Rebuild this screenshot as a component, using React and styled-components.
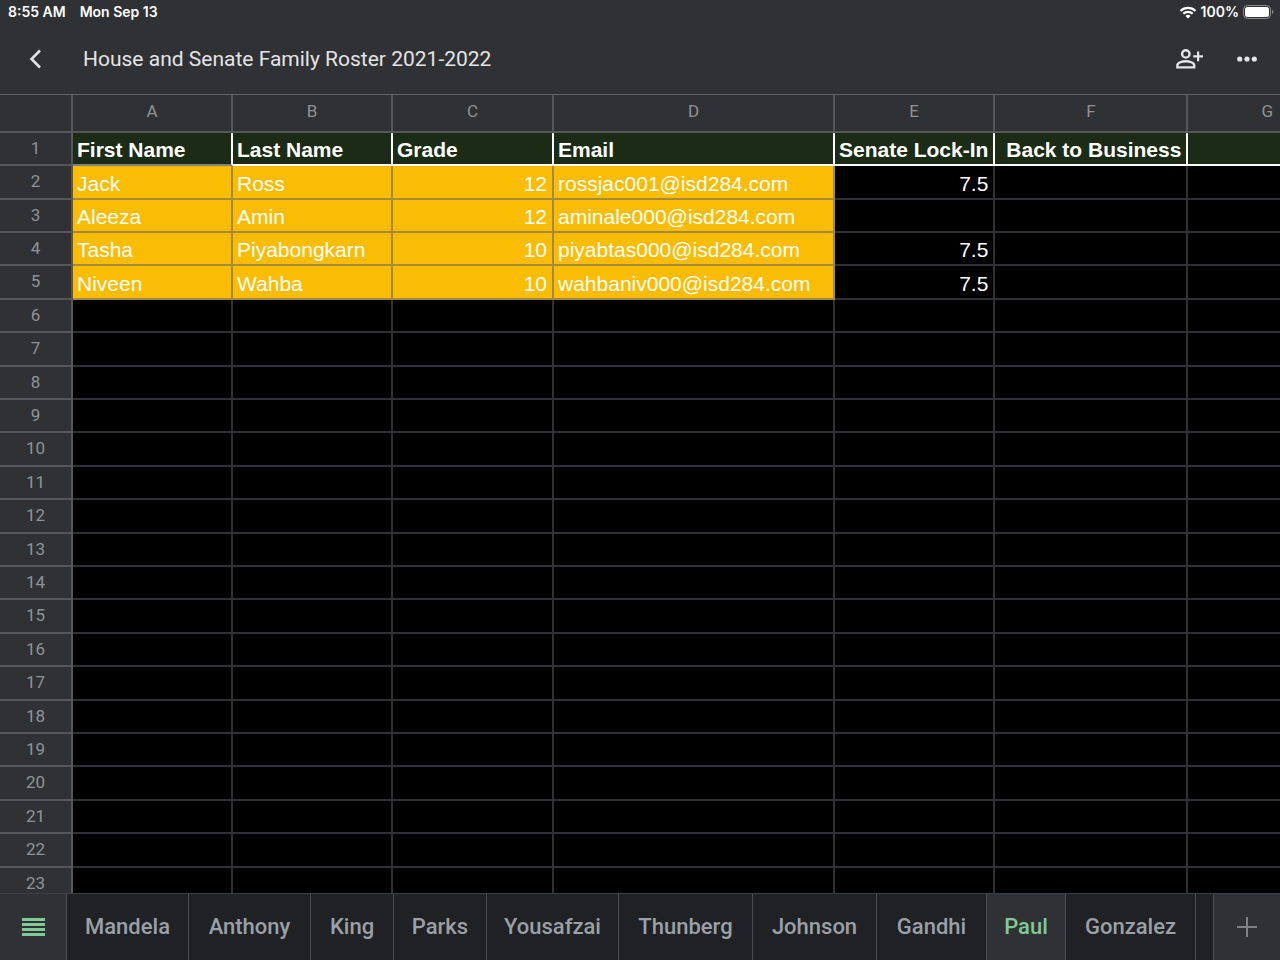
import styled, { createGlobalStyle } from 'styled-components';

const columns = [
  { name: 'A', width: 160 },
  { name: 'B', width: 160 },
  { name: 'C', width: 161 },
  { name: 'D', width: 281 },
  { name: 'E', width: 160 },
  { name: 'F', width: 193 },
  { name: 'G', width: 160 },
];

const headings = [
  'First Name',
  'Last Name',
  'Grade',
  'Email',
  'Senate Lock-In',
  'Back to Business',
  '',
];

const people = [
  ['Jack', 'Ross', 12, 'rossjac001@isd284.com', 7.5],
  ['Aleeza', 'Amin', 12, 'aminale000@isd284.com', ''],
  ['Tasha', 'Piyabongkarn', 10, 'piyabtas000@isd284.com', 7.5],
  ['Niveen', 'Wahba', 10, 'wahbaniv000@isd284.com', 7.5],
];

const ROW_COUNT = 23;
const FILLED_COLUMNS = 4;

const sheets = [
  { name: 'Mandela', width: 122 },
  { name: 'Anthony', width: 122 },
  { name: 'King', width: 83 },
  { name: 'Parks', width: 93 },
  { name: 'Yousafzai', width: 132 },
  { name: 'Thunberg', width: 134 },
  { name: 'Johnson', width: 124 },
  { name: 'Gandhi', width: 110 },
  { name: 'Paul', width: 79, active: true },
  { name: 'Gonzalez', width: 130 },
];

const WifiIcon = () => (
  <svg width="18" height="13" viewBox="0 0 18 13" fill="none" stroke="#fff">
    <path d="M1.6 4.9a10.6 10.6 0 0 1 14.8 0" strokeWidth="2.1" />
    <path d="M4.3 7.8a6.7 6.7 0 0 1 9.4 0" strokeWidth="2.1" />
    <path d="M9 12.6 6.5 10a3.6 3.6 0 0 1 5 0Z" fill="#fff" stroke="none" />
  </svg>
);

const BatteryIcon = () => (
  <svg width="31" height="14" viewBox="0 0 31 14">
    <rect x="0.5" y="0.5" width="27" height="13" rx="4" fill="none" stroke="#8b8c8f" />
    <rect x="2" y="2" width="24" height="10" rx="2.5" fill="#fff" />
    <path d="M29 4.8c1.6.5 1.6 3.9 0 4.4Z" fill="#8b8c8f" />
  </svg>
);

const BackIcon = () => (
  <svg width="14" height="20" viewBox="0 0 14 20" fill="none" stroke="#e3e4e6">
    <path d="M12 1.5 3.5 10l8.5 8.5" strokeWidth="2.5" />
  </svg>
);

const AddPersonIcon = () => (
  <svg width="28" height="20" viewBox="0 0 28 20" fill="none" stroke="#e3e4e6">
    <circle cx="10.8" cy="4.9" r="3.7" strokeWidth="2.4" />
    <path
      d="M2.4 18.4v-2.2c0-2.5 4.9-4 8.4-4s8.4 1.5 8.4 4v2.2Z"
      strokeWidth="2.4"
    />
    <path d="M18.2 7.3H28M23.1 2.4v9.8" strokeWidth="2.2" />
  </svg>
);

const MoreIcon = () => (
  <svg width="20" height="6" viewBox="0 0 20 6" fill="#e3e4e6">
    <circle cx="2.7" cy="3" r="2.6" />
    <circle cx="10" cy="3" r="2.6" />
    <circle cx="17.3" cy="3" r="2.6" />
  </svg>
);

const SheetsIcon = () => (
  <svg width="23" height="18" viewBox="0 0 23 18" fill="#81c995">
    <rect y="0" width="23" height="3" />
    <rect y="5" width="23" height="3" />
    <rect y="10" width="23" height="3" />
    <rect y="15" width="23" height="3" />
  </svg>
);

const PlusIcon = () => (
  <svg width="20" height="20" viewBox="0 0 20 20" stroke="#7d8085">
    <path d="M10 0v20M0 10h20" strokeWidth="2" />
  </svg>
);

const App = () => {
  const rows = Array.from({ length: ROW_COUNT - 1 }, (_, i) => people[i] || []);

  return (
    <Page>
      <GlobalStyle />
      <StatusBar>
        <span>8:55 AM</span>
        <span>Mon Sep 13</span>
        <StatusRight>
          <WifiIcon />
          <span>100%</span>
          <BatteryIcon />
        </StatusRight>
      </StatusBar>

      <Toolbar>
        <IconButton aria-label="Back">
          <BackIcon />
        </IconButton>
        <Title>House and Senate Family Roster 2021-2022</Title>
        <IconButton aria-label="Share">
          <AddPersonIcon />
        </IconButton>
        <IconButton aria-label="More">
          <MoreIcon />
        </IconButton>
      </Toolbar>

      <Grid>
        <Table>
          <colgroup>
            <Column $width={73} />
            {columns.map(({ name, width }) => (
              <Column key={name} $width={width} />
            ))}
          </colgroup>
          <thead>
            <tr>
              <ColumnLabel aria-label="Row" />
              {columns.map(({ name }) => (
                <ColumnLabel key={name} scope="col">
                  {name}
                </ColumnLabel>
              ))}
            </tr>
          </thead>
          <tbody>
            <Row>
              <RowLabel scope="row">1</RowLabel>
              {headings.map((text, i) => (
                <HeadingCell key={columns[i].name} $first={i === 0} $right={i > 4}>
                  {text}
                </HeadingCell>
              ))}
            </Row>
            {rows.map((row, r) => (
              <Row key={r}>
                <RowLabel scope="row">{r + 2}</RowLabel>
                {columns.map(({ name }, c) => (
                  <Cell
                    key={name}
                    $filled={row.length > 0 && c < FILLED_COLUMNS}
                    $right={typeof row[c] === 'number'}
                  >
                    {row[c]}
                  </Cell>
                ))}
              </Row>
            ))}
          </tbody>
        </Table>
      </Grid>

      <TabBar>
        <SheetsButton aria-label="All sheets">
          <SheetsIcon />
        </SheetsButton>
        <Tabs>
          {sheets.map(({ name, width, active }) => (
            <Tab key={name} $width={width} $active={active}>
              {name}
            </Tab>
          ))}
        </Tabs>
        <AddButton aria-label="Add sheet">
          <PlusIcon />
        </AddButton>
      </TabBar>
    </Page>
  );
};

const GlobalStyle = createGlobalStyle`
  * {
    box-sizing: border-box;
  }

  body {
    margin: 0;
    background: #000;
  }

  button {
    padding: 0;
    border: 0;
    background: none;
    font: inherit;
  }

  svg {
    display: block;
  }
`;

const Page = styled.div`
  display: flex;
  flex-direction: column;
  height: 100vh;
  background: #303134;
  color: #fff;
  font-family: 'Liberation Sans', Arial, sans-serif;
`;

const StatusBar = styled.div`
  display: flex;
  flex: none;
  align-items: center;
  gap: 14px;
  height: 24px;
  padding: 0 6px 0 8px;
  font-family: Inter, sans-serif;
  font-weight: 600;
  font-size: 14px;
  line-height: 24px;
`;

const StatusRight = styled.div`
  display: flex;
  align-items: center;
  gap: 4px;
  margin-left: auto;
`;

const Toolbar = styled.header`
  display: flex;
  flex: none;
  align-items: center;
  height: 70px;
  padding: 0 4px 0 6px;
`;

const IconButton = styled.button`
  display: flex;
  flex: none;
  align-items: center;
  justify-content: center;
  width: 58px;
  height: 48px;
`;

const Title = styled.h1`
  flex: 1;
  margin: 0;
  padding-left: 19px;
  color: #e3e4e6;
  font-family: Roboto, sans-serif;
  font-weight: 400;
  font-size: 21px;
  line-height: 28px;
`;

const Grid = styled.main`
  flex: 1;
  min-height: 0;
  overflow: auto;
  border-top: 1px solid #5f6368;
  background: #000;
  scrollbar-width: none;
`;

const Table = styled.table`
  width: max-content;
  border-spacing: 0;
  table-layout: fixed;
`;

const Column = styled.col`
  width: ${(p) => p.$width}px;
`;

const Label = styled.th`
  border-right: 2px solid #55575b;
  border-bottom: 2px solid #55575b;
  background: #303134;
  color: #8f9398;
  font-family: Roboto, sans-serif;
  font-weight: 400;
  font-size: 17px;
  line-height: 20px;
`;

const ColumnLabel = styled(Label)`
  height: 38px;
  padding: 0 0 4px;
`;

const RowLabel = styled(Label)`
  padding: 0 0 2px;
`;

/* rows run 33/34/33/33/34 so that five of them take 167px */
const Row = styled.tr`
  height: 33px;

  &:nth-child(5n + 2),
  &:nth-child(5n) {
    height: 34px;
  }
`;

const Cell = styled.td`
  padding: 3px 5px 0 4px;
  border-right: 2px solid ${(p) => (p.$filled ? '#a58a3c' : '#303134')};
  border-bottom: 2px solid ${(p) => (p.$filled ? '#a58a3c' : '#303134')};
  background: ${(p) => (p.$filled ? '#fbbc04' : '#000')};
  font-size: 21px;
  line-height: 24px;
  text-align: ${(p) => (p.$right ? 'right' : 'left')};
  white-space: nowrap;
`;

const HeadingCell = styled(Cell)`
  border-right-color: #fff;
  border-bottom-color: ${(p) => (p.$first ? '#7d8085' : '#fff')};
  background: #1c2b16;
  font-weight: 700;
`;

const TabBar = styled.nav`
  display: flex;
  flex: none;
  height: 67px;
  border-top: 1px solid #3c4043;
  background: #202124;
  color: #9aa0a6;
`;

const SheetsButton = styled.button`
  display: flex;
  flex: none;
  align-items: center;
  justify-content: center;
  width: 67px;
  border-right: 1px solid #4a4c50;
  background: #303134;
`;

const Tabs = styled.div`
  display: flex;
  flex: 1;
  min-width: 0;
  overflow: hidden;
`;

const Tab = styled.button`
  flex: none;
  width: ${(p) => p.$width}px;
  border-right: 1px solid #4a4c50;
  background: ${(p) => (p.$active ? '#303134' : 'transparent')};
  color: ${(p) => (p.$active ? '#81c995' : '#9aa0a6')};
  font-family: Roboto, sans-serif;
  font-weight: 500;
  font-size: 22px;
  line-height: 28px;
`;

const AddButton = styled.button`
  display: flex;
  flex: none;
  align-items: center;
  justify-content: center;
  width: 67px;
  border-left: 1px solid #4a4c50;
  background: #303134;
`;

export default App;
